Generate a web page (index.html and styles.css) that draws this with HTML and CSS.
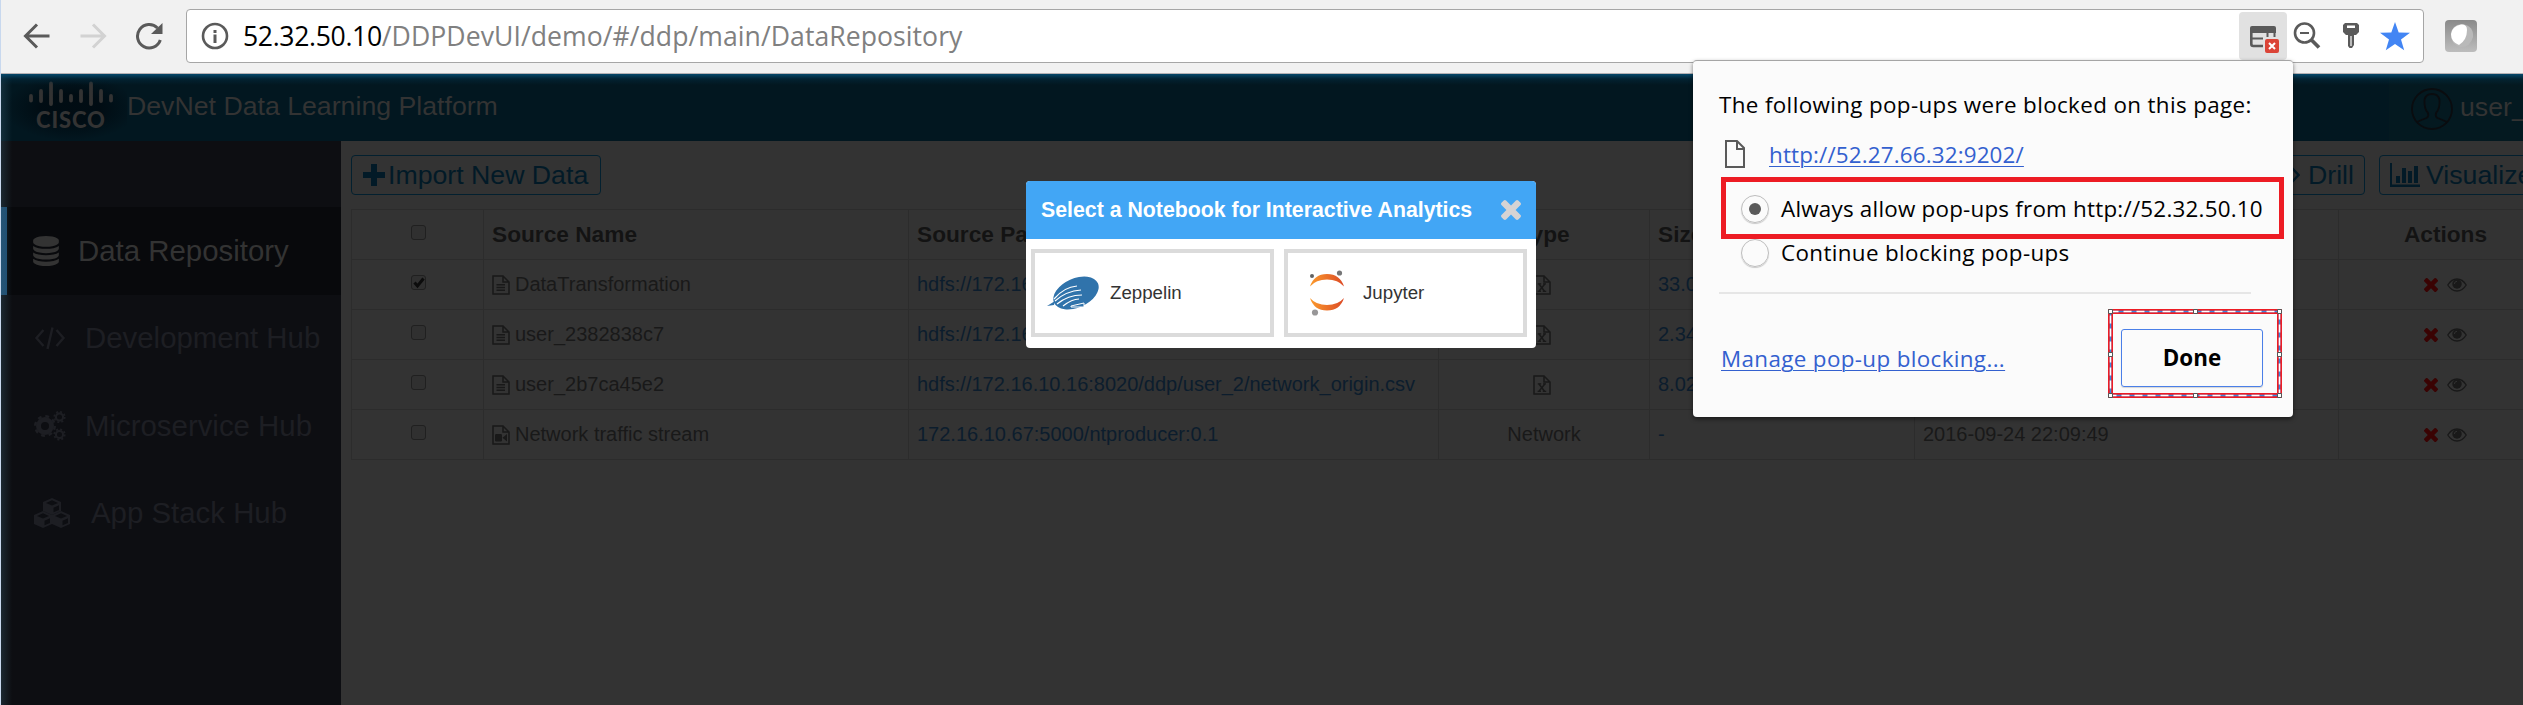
FILE: index.html
```html
<!DOCTYPE html>
<html lang="en">
<head>
<meta charset="utf-8">
<title>DevNet Data Learning Platform</title>
<link rel="stylesheet" href="styles.css">
</head>
<body>
<svg class="defs" width="0" height="0">
  <defs>
    <linearGradient id="orange" x1="0" x2="1" y1="0" y2="0"><stop offset="0" stop-color="#fb9a2c"/><stop offset="1" stop-color="#dc4a26"/></linearGradient>
    <linearGradient id="silver" x1="0" x2="0" y1="0" y2="1"><stop offset="0" stop-color="#8a8a8a"/><stop offset="1" stop-color="#bdbdbd"/></linearGradient>
    <symbol id="file" viewBox="0 0 18 20"><path d="M1 1H11L17 7V19H1ZM11 1V7H17" fill="none" stroke="currentColor" stroke-width="1.5"/><path d="M4.5 9.7H13M4.5 12.5H13M4.5 15.3H13" stroke="currentColor" stroke-width="1.4"/></symbol>
    <symbol id="video" viewBox="0 0 18 20"><path d="M1 1H11L17 7V19H1ZM11 1V7H17" fill="none" stroke="currentColor" stroke-width="1.5"/><rect x="3" y="9" width="7" height="7.4" rx="1.2" fill="currentColor"/><path d="M10.5 12.7L15 9V16.4Z" fill="currentColor"/></symbol>
    <symbol id="excel" viewBox="0 0 18 20"><path d="M1 1H11L17 7V19H1ZM11 1V7H17" fill="none" stroke="currentColor" stroke-width="1.5"/><path d="M6 9L11.5 16.3M11.8 9L6 16.3" stroke="currentColor" stroke-width="1.5"/><path d="M4.8 8.9H8.2M10 8.9H13M4.6 16.4H8M9.8 16.4H13.2" stroke="currentColor" stroke-width="1.2"/></symbol>
    <symbol id="times" viewBox="110 258 1188 1188"><path fill="currentColor" d="M1298 1214q0 40-28 68l-136 136q-28 28-68 28t-68-28l-294-294-294 294q-28 28-68 28t-68-28l-136-136q-28-28-28-68t28-68l294-294-294-294q-28-28-28-68t28-68l136-136q28-28 68-28t68 28l294 294 294-294q28-28 68-28t68 28l136 136q28 28 28 68t-28 68l-294 294 294 294q28 28 28 68z"/></symbol>
    <symbol id="eye" viewBox="0 0 20 14"><path d="M.8 7Q4.500 1 10 1T19.200 7Q15.500 13 10 13T.8 7Z" fill="none" stroke="currentColor" stroke-width="1.3"/><circle cx="10" cy="6" r="4.700" fill="currentColor"/><path d="M7.400 6A2.700 2.700 0 0 1 10 3.300" stroke="#333" fill="none" stroke-width=".9"/></symbol>
  </defs>
</svg>
<div class="window">
  <div class="toolbar">
    <div class="nav">
      <svg width="28" height="28" viewBox="0 0 28 28"><path d="M26.500 14H3M14 2.500L2.500 14L14 25.500" fill="none" stroke="#5a5a5a" stroke-width="3"/></svg>
      <svg width="28" height="28" viewBox="0 0 28 28"><path d="M1.500 14H25M14 2.500L25.500 14L14 25.500" fill="none" stroke="#d2d2d2" stroke-width="3"/></svg>
      <svg width="28" height="28" viewBox="0 0 28 28"><path d="M25.300 18A11.700 11.700 0 1 1 22.500 6" fill="none" stroke="#5a5a5a" stroke-width="3"/><path d="M27.500 1V12H16Z" fill="#5a5a5a"/></svg>
    </div>
    <div class="omnibox">
      <svg class="info" width="28" height="28" viewBox="0 0 28 28"><circle cx="14" cy="14" r="12" fill="none" stroke="#5a5a5a" stroke-width="2.600"/><path d="M14 8V11M14 12.500V21" stroke="#5a5a5a" stroke-width="3"/></svg>
      <div class="url"><span class="host">52.32.50.10</span><span class="path">/DDPDevUI/demo/#/ddp/main/DataRepository</span></div>
      <div class="blocked"><svg width="30" height="28" viewBox="0 0 30 28"><path d="M3 1H25Q27 1 27 3V8H1V3Q1 1 3 1Z" fill="#5a5a5a"/><path d="M2.300 7V19Q2.300 21 4.300 21H14" fill="none" stroke="#5a5a5a" stroke-width="2.600"/><path d="M2 13.500H14M18.500 8V12M25.500 8V12" stroke="#5a5a5a" stroke-width="2"/><rect x="16" y="14" width="14" height="14" rx="2" fill="#db4437"/><path d="M20 18L26 24M26 18L20 24" stroke="#fff" stroke-width="2"/></svg></div>
      <svg class="lens" width="28" height="28" viewBox="0 0 28 28"><circle cx="11.500" cy="11" r="9.500" fill="none" stroke="#5a5a5a" stroke-width="2.600"/><path d="M7 11H16" stroke="#5a5a5a" stroke-width="2"/><path d="M18 17.500L26 25.500" stroke="#5a5a5a" stroke-width="3.800"/></svg>
      <svg class="key" width="16" height="26" viewBox="0 0 16 26"><path d="M2 0H14L16 2V9L13 12H3L0 9V2ZM4 2.500V5H12V2.500Z" fill="#5a5a5a" fill-rule="evenodd"/><path d="M5 11H11V22L9 25H6.500L5 23Z" fill="#5a5a5a"/><path d="M8 13V23" stroke="#ddd" stroke-width="1.500"/></svg>
      <svg class="star" width="30" height="29" viewBox="0 0 30 29"><path d="M15 0L18.700 10.500L30 10.800L21 17.500L24.200 28.300L15 21.900L5.800 28.300L9 17.500L0 10.800L11.300 10.500Z" fill="#4285f4"/></svg>
    </div>
    <svg class="ext" width="32" height="32" viewBox="0 0 32 32"><rect width="32" height="32" rx="4" fill="url(#silver)"/><path d="M6 15Q6 5 17 4Q29 6 28 17Q25 28 15 27Q6 24 6 15Z" fill="#b9b9b9"/><path d="M6 14Q7 6 16 4.500Q22 4 22 10Q22 20 14 25Q6 22 6 14Z" fill="#fff"/></svg>
  </div>
  <div class="page">
    <div class="header">
      <div class="logo">
        <svg width="86" height="26" viewBox="0 0 86 26"><path d="M2 15V19.500M12 10V20M22 2.500V23M32 10V20M42 15V19.500M52 10V20M62 2.500V23M72 10V20M82 15V19.500" stroke="#333" stroke-width="3.800" stroke-linecap="round"/></svg>
        <span class="wordmark">CISCO</span>
      </div>
      <div class="brand">DevNet Data Learning Platform</div>
      <div class="user">
        <svg width="42" height="42" viewBox="0 0 42 42" fill="none" stroke="#0a0c0f" stroke-width="1.800"><circle cx="21" cy="21" r="20"/><path d="M6 34Q10 32 15.500 30Q18 28.500 17 25Q13 21 13.500 12Q14.500 6 21 6T28.500 12Q29 21 25 25Q24 28.500 26.500 30Q32 32 36 34"/></svg>
        <span>user_</span>
      </div>
    </div>
    <div class="body">
      <div class="sidebar">
        <div class="item active"><svg width="26" height="30" viewBox="0 0 1536 1792"><path fill="currentColor" d="M768 768q237 0 443-43t325-127v170q0 69-103 128t-280 93.500-385 34.500-385-34.500-280-93.500-103-128v-170q119 84 325 127t443 43zm0 768q237 0 443-43t325-127v170q0 69-103 128t-280 93.500-385 34.500-385-34.500-280-93.500-103-128v-170q119 84 325 127t443 43zm0-384q237 0 443-43t325-127v170q0 69-103 128t-280 93.500-385 34.500-385-34.500-280-93.500-103-128v-170q119 84 325 127t443 43zm0-1152q208 0 385 34.500t280 93.500 103 128v128q0 69-103 128t-280 93.500-385 34.500-385-34.500-280-93.500-103-128v-128q0-69 103-128t280-93.500 385-34.500z"/></svg><span>Data Repository</span></div>
        <div class="item"><svg width="32" height="24" viewBox="0 0 32 24" fill="none" stroke="currentColor" stroke-width="2.400"><path d="M9.500 4L2.500 12L9.500 20M22.500 4L29.500 12L22.500 20M18.500 1.500L13.500 23"/></svg><span>Development Hub</span></div>
        <div class="item"><svg width="32" height="30" viewBox="0 0 32 30" fill="none" stroke="currentColor"><circle cx="11" cy="15" r="6.500" stroke-width="5"/><circle cx="11" cy="15" r="9.700" stroke-width="2.600" stroke-dasharray="3.810 3.810"/><circle cx="25.500" cy="6" r="3.600" stroke-width="2.200"/><circle cx="25.500" cy="6" r="5.200" stroke-width="1.800" stroke-dasharray="2.040 2.040"/><circle cx="25.500" cy="23.500" r="3.600" stroke-width="2.200"/><circle cx="25.500" cy="23.500" r="5.200" stroke-width="1.800" stroke-dasharray="2.040 2.040"/></svg><span>Microservice Hub</span></div>
        <div class="item"><svg width="36" height="30" viewBox="0 0 36 30"><g id="cube"><path d="M18 0L27 4V13L18 17L9 13V4Z" fill="currentColor"/><path d="M18 2.300L24 4.900L18 7.500L12 4.900ZM19.500 9.800L25 7.300V12L19.500 14.300Z" fill="#0d0e12"/></g><use href="#cube" transform="translate(-9 13)"/><use href="#cube" transform="translate(9 13)"/></svg><span>App Stack Hub</span></div>
      </div>
      <div class="content">
        <div class="actions">
          <div class="btn import"><svg width="22" height="22" viewBox="0 0 22 22"><path d="M8 0H14V8H22V14H14V22H8V14H0V8H8Z" fill="currentColor"/></svg><span>Import New Data</span></div>
          <div class="btn drill"><svg width="30" height="22" viewBox="0 0 30 22" fill="none" stroke="currentColor" stroke-width="2.400"><path d="M8 4L1.500 11L8 18M22 4L28.500 11L22 18M17.500 1L12.500 21"/></svg><span>Drill</span></div>
          <div class="btn visualize"><svg width="30" height="24" viewBox="0 0 30 24" fill="currentColor"><path d="M0 0H2V21.500H30V24H0ZM6 13H10V20H6ZM12 5H16V20H12ZM18 8H22V20H18ZM24 3H28V20H24Z"/></svg><span>Visualize</span></div>
        </div>
        <div class="table">
          <div class="row head"><div class="mid"><i class="check"></i></div><div>Source Name</div><div>Source Path</div><div class="mid">Type</div><div>Size</div><div></div><div class="mid">Actions</div></div>
          <div class="row"><div class="mid"><i class="check"><svg width="12" height="11" viewBox="0 0 12 11"><path d="M1.500 5.500L4.500 9L10.500 1.500" fill="none" stroke="#0c0c0c" stroke-width="3"/></svg></i></div><div><svg class="fi"><use href="#file"/></svg>DataTransformation</div><div class="link">hdfs://172.16</div><div class="mid"><svg class="fi"><use href="#excel"/></svg></div><div class="link">33.0</div><div></div><div class="mid"><svg class="del"><use href="#times"/></svg><svg class="see"><use href="#eye"/></svg></div></div>
          <div class="row"><div class="mid"><i class="check"></i></div><div><svg class="fi"><use href="#file"/></svg>user_2382838c7</div><div class="link">hdfs://172.16</div><div class="mid"><svg class="fi"><use href="#excel"/></svg></div><div class="link">2.34</div><div></div><div class="mid"><svg class="del"><use href="#times"/></svg><svg class="see"><use href="#eye"/></svg></div></div>
          <div class="row"><div class="mid"><i class="check"></i></div><div><svg class="fi"><use href="#file"/></svg>user_2b7ca45e2</div><div class="link">hdfs://172.16.10.16:8020/ddp/user_2/network_origin.csv</div><div class="mid"><svg class="fi"><use href="#excel"/></svg></div><div class="link">8.02</div><div></div><div class="mid"><svg class="del"><use href="#times"/></svg><svg class="see"><use href="#eye"/></svg></div></div>
          <div class="row"><div class="mid"><i class="check"></i></div><div><svg class="fi"><use href="#video"/></svg>Network traffic stream</div><div class="link">172.16.10.67:5000/ntproducer:0.1</div><div class="mid">Network</div><div class="link">-</div><div>2016-09-24 22:09:49</div><div class="mid"><svg class="del"><use href="#times"/></svg><svg class="see"><use href="#eye"/></svg></div></div>
        </div>
      </div>
    </div>
    <div class="glow"></div>
  </div>

  <div class="modal">
    <div class="modal-head"><span>Select a Notebook for Interactive Analytics</span><svg width="20" height="20"><use href="#times"/></svg></div>
    <div class="modal-body">
      <div class="choice"><svg width="54" height="34" viewBox="0 0 54 34"><g transform="rotate(-24 30 17)"><ellipse cx="30" cy="17" rx="24" ry="14.500" fill="#3073ab"/></g><path d="M1 30L9 25L8 29ZM11 16L14 11V16Z" fill="#3073ab"/><path d="M8 23Q18 11 31 10M9 25Q20 15 35 14M11 28Q22 19 36 19M17 30Q26 23 33 23" fill="none" stroke="#fff" stroke-width="1.200"/><path d="M25 30L38 27V31H25Z" fill="#3073ab" stroke="#fff"/></svg><span>Zeppelin</span></div>
      <div class="choice jup"><svg width="36" height="48" viewBox="0 0 36 48"><path d="M1 17.500Q5 5 18 5T35 17.500Q29 10.500 18 10.500T1 17.500ZM1 29Q7 36 18 36T35 29Q31 41.500 18 41.500T1 29Z" fill="url(#orange)"/><circle cx="3" cy="7" r="2" fill="#616262"/><circle cx="30.500" cy="4" r="2.600" fill="#767677"/><circle cx="6" cy="43.500" r="3.100" fill="#989798"/></svg><span>Jupyter</span></div>
    </div>
  </div>

  <div class="popup">
    <div class="p-title">The following pop-ups were blocked on this page:</div>
    <div class="p-site"><svg width="20" height="28" viewBox="0 0 20 28"><path d="M1 1H12L19 8V27H1ZM12 1V9H19" fill="none" stroke="#5a5a5a" stroke-width="2"/></svg><span class="a">http://52.27.66.32:9202/</span></div>
    <div class="p-opt first"><i class="radio on"></i><span>Always allow pop-ups from http://52.32.50.10</span></div>
    <div class="p-opt"><i class="radio"></i><span>Continue blocking pop-ups</span></div>
    <div class="p-foot"><span class="a">Manage pop-up blocking...</span><div class="done">Done</div></div>
    <div class="mark"></div>
    <svg class="select" width="174" height="90" viewBox="0 0 174 90"><rect x="2.500" y="2.500" width="169" height="84" fill="none" stroke="#ed1c24" stroke-width="5"/><rect x="2.500" y="2.500" width="169" height="84" fill="none" stroke="#3c8be0" stroke-width="1.500"/><rect x="2.500" y="2.500" width="169" height="84" fill="none" stroke="#fff" stroke-width="1.500" stroke-dasharray="8 5"/><g fill="#fff" stroke="#555"><path d="M.5.5h4v4h-4zM85.500.5h4v4h-4zM169.500.5h4v4h-4zM.5 43.500h4v4h-4zM169.500 43.500h4v4h-4zM.5 84.500h4v4h-4zM85.500 84.500h4v4h-4zM169.500 84.500h4v4h-4z"/></g></svg>
  </div>
</div>
</body>
</html>
```
FILE: styles.css
```css
* { box-sizing: border-box; }
body { margin: 0; font-family: "Liberation Sans", Arial, sans-serif; }
.defs { position: absolute; }
svg { flex: none; display: block; }
span, .row, .p-title { white-space: nowrap; }
.window { position: relative; width: 2523px; height: 705px; overflow: hidden; border-left: 1px solid #c8d8ee; display: flex; flex-direction: column; background: #333; }

.toolbar { height: 74px; flex: none; background: #f1f1f1; border-bottom: 1px solid #b4b1b4; display: flex; align-items: flex-start; padding: 9px 0 0 22px; font-family: "Open Sans", sans-serif; }
.nav { display: flex; gap: 28px; padding-top: 13px; width: 163px; flex: none; }
.omnibox { width: 2238px; height: 54px; flex: none; border: 1px solid #a6a6a6; border-radius: 4px; background: #fff; display: flex; align-items: center; padding-left: 14px; }
.url { margin-left: 14px; width: 1996px; flex: none; font-size: 26.6px; line-height: 36px; letter-spacing: 0.05px; color: #808080; padding-bottom: 1px; }
.host { color: #000; letter-spacing: -0.35px; }
.blocked { width: 48px; height: 48px; background: #e1e1e1; border-radius: 4px; padding: 13px 0 0 10px; }
.lens { margin-left: 6px; }
.key { margin-left: 22px; }
.star { margin-left: 21px; }
.ext { margin: 11px 0 0 21px; }

.page { position: relative; flex: 1; width: 2560px; display: flex; flex-direction: column; }
.header { height: 67px; flex: none; background: #021720; display: flex; color: #333; font-size: 26.7px; }
.logo { width: 126px; padding: 7px 0 0 28px; display: flex; flex-direction: column; background: radial-gradient(ellipse at 70px 34px, rgba(0,8,14,.7) 30%, transparent 68%); }
.wordmark { font: 900 22px/22px Lato, sans-serif; letter-spacing: 0.9px; padding-left: 7px; margin-top: 2px; }
.brand { line-height: 31px; padding-top: 17px; width: 2262px; }
.user { flex: 1; background: #041920; display: flex; align-items: center; gap: 7px; padding: 3px 0 0 22px; }
.user span { padding-bottom: 3px; }
.glow { position: absolute; inset: 0; background: linear-gradient(#04476a, rgba(3,50,75,.4) 5px, transparent 11px) 0 0 / 100% 12px no-repeat, linear-gradient(to right, rgba(60,100,120,.3), transparent 11px); }

.body { flex: 1; display: flex; }
.sidebar { width: 340px; flex: none; background: #0d0e12; padding-top: 66px; color: #1d1e23; font-size: 29.4px; }
.item { height: 87.5px; display: flex; align-items: center; padding-left: 33px; }
.item span { margin-left: 19px; }
.item:nth-child(4) span { margin-left: 21px; }
.active { background: #08090c; border-left: 6px solid #1d4e74; padding-left: 26px; color: #333; }
.content { flex: 1; background: #333; padding: 14px 0 0 10px; }
.actions { display: flex; height: 40px; color: #021a27; font-size: 26.7px; }
.btn { height: 40px; border: 1px solid #03202f; border-radius: 4px; display: flex; align-items: center; padding-left: 11px; }
.import { width: 250px; }
.import span { margin-left: 3px; }
.drill { width: 107px; margin-left: 1657px; }
.drill span { margin-left: 8px; }
.visualize { width: 180px; margin-left: 14px; padding-left: 10px; }
.visualize span { margin-left: 6px; }

.table { margin-top: 14px; border-top: 1px solid #2c2c2c; border-left: 1px solid #2c2c2c; font-size: 20px; color: #191919; width: 2202px; }
.row { display: grid; grid-template-columns: 132px 425px 530px 211px 265px 424px 214px; height: 50px; }
.row > div { border-right: 1px solid #2c2c2c; border-bottom: 1px solid #2c2c2c; display: flex; align-items: center; padding-left: 8px; overflow: hidden; }
.row > .mid { justify-content: center; padding: 0; }
.head { font-weight: 700; font-size: 22.7px; color: #131313; }
.row > .link { color: #0c1d2d; }
.fi { width: 18px; height: 20px; margin-right: 5px; }
.check { width: 15px; height: 15px; border: 1.5px solid #202020; border-radius: 3px; background: #303030; margin: -5px 0 0 2px; padding: 1px; }
.check svg { overflow: visible; }
.del { width: 14px; height: 14px; color: #3a0303; margin-right: 9px; }
.see { width: 20px; height: 14px; }

.modal { position: absolute; left: 1025px; top: 181px; width: 510px; height: 167px; background: #fff; border-radius: 4px; overflow: hidden; }
.modal-head { height: 58px; background: #42a6f5; color: #fff; font-weight: 700; font-size: 21.3px; display: flex; align-items: center; justify-content: space-between; padding: 0 15px; }
.modal-head svg { color: #d6d3d4; }
.modal-body { display: flex; gap: 10px; padding: 10px 5px; }
.choice { width: 243px; height: 88px; border: 4px solid #dbdbdb; display: flex; align-items: center; padding-left: 11px; font-size: 18.7px; color: #333; }
.choice span { margin-left: 10px; }
.jup { padding-left: 21px; }
.jup span { margin-left: 18px; }

.popup { position: absolute; left: 1692px; top: 60px; width: 600px; height: 357px; background: #fbfbfb; border-top: 1px solid #a5a5a5; border-radius: 4px; box-shadow: 0 2px 4px rgba(0,0,0,.5); font-family: "Open Sans", sans-serif; font-size: 22.4px; letter-spacing: 0.36px; line-height: 30px; color: #000; padding: 29px 27px 0 26px; }
.a { color: #3360cf; text-decoration: underline; text-decoration-thickness: 1px; text-underline-offset: 3px; }
.p-site { display: flex; margin: 20px 0 0 6px; letter-spacing: 0.16px; }
.p-site span { margin-left: 24px; }
.p-opt { display: flex; align-items: center; height: 44px; padding-left: 22px; }
.p-opt.first { margin-top: 17px; letter-spacing: 0.22px; }
.p-opt span { margin-left: 12px; }
.radio { width: 28px; height: 28px; flex: none; border: 1px solid #bdbdbd; border-radius: 50%; box-shadow: 0 1px 1px rgba(0,0,0,.2); display: flex; align-items: center; justify-content: center; }
.radio.on::after { content: ""; width: 12px; height: 12px; border-radius: 50%; background: #5a5a5a; }
.p-foot { width: 532px; margin-top: 17px; border-top: 2px solid #e6e6e6; display: flex; align-items: flex-start; justify-content: space-between; padding-top: 35px; }
.p-foot .a { margin: 15px 0 0 2px; }
.done { width: 142px; height: 58px; margin-right: -12px; border: 1px solid #4a7fe8; border-radius: 3px; text-align: center; font-weight: 700; letter-spacing: 0; line-height: 55px; box-shadow: 0 1px 1px rgba(0,0,0,.15); }
.mark { position: absolute; left: 28px; top: 116px; width: 563px; height: 62px; border: 5px solid #ed1c24; }
.select { position: absolute; left: 415px; top: 248px; }
```
